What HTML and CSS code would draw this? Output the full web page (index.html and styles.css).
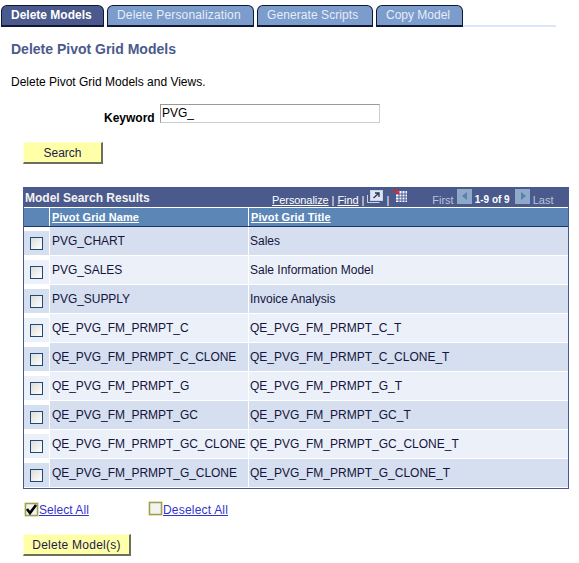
FILE: index.html
```html
<!DOCTYPE html>
<html>
<head>
<meta charset="utf-8">
<title>Delete Pivot Grid Models</title>
<link rel="stylesheet" href="styles.css">
</head>
<body>
<nav class="tabs">
  <a class="tab tab-active t1">Delete Models</a>
  <a class="tab t2">Delete Personalization</a>
  <a class="tab t3">Generate Scripts</a>
  <a class="tab t4">Copy Model</a>
  <span class="tab-rest"></span>
</nav>
<h1 class="title">Delete Pivot Grid Models</h1>
<p class="desc">Delete Pivot Grid Models and Views.</p>
<div class="keyword-row">
  <label class="keyword-label">Keyword</label>
  <input class="keyword-input" type="text" value="PVG_">
</div>
<button class="btn btn-search">Search</button>
<section class="grid">
  <div class="grid-bar">
    <span class="grid-title">Model Search Results</span>
    <span class="grid-tools">
      <a>Personalize</a><i>|</i><a>Find</a><i>|</i>
      <svg class="ico-zoom" width="16" height="13" viewBox="0 0 16 13">
        <path d="M.5 5v7.500h12" fill="none" stroke="#c9d3e6"/>
        <rect x="3.500" y="0.500" width="12" height="10" fill="#dfe6f2" stroke="#c9d3e6"/>
        <path d="M6.500 8l5-4.500M8 3h4v4" fill="none" stroke="#26345e" stroke-width="1.300"/>
      </svg>
      <i>|</i>
      <svg class="ico-dl" width="14" height="14" viewBox="0 0 14 14">
        <path d="M3 2h11v11H3z" fill="#fff"/>
        <path d="M6 2v11M9 2v11M12 2v11M3 5h11M3 8h11M3 11h11" stroke="#4a5a9c"/>
        <path d="M0 0l5 4" stroke="#d8262c" stroke-width="2"/>
        <path d="M2 5h4V1z" fill="#d8262c"/>
      </svg>
    </span>
    <span class="grid-pager">
      <span class="dim first">First</span>
      <svg class="arrow" width="15" height="15" viewBox="0 0 15 15"><rect width="15" height="15" fill="#8fa9c8"/><path d="M10 3v8L5 7z" fill="#5b80aa"/></svg>
      <b class="count">1-9 of 9</b>
      <svg class="arrow" width="15" height="15" viewBox="0 0 15 15"><rect width="15" height="15" fill="#8fa9c8"/><path d="M6 3v8l5-4z" fill="#5b80aa"/></svg>
      <span class="dim last">Last</span>
    </span>
  </div>
  <div class="row head">
    <div class="c0"></div>
    <div class="c1"><a>Pivot Grid Name</a></div>
    <div class="c2"><a>Pivot Grid Title</a></div>
  </div>
  <div class="row odd"><div class="c0"><span class="box"></span></div><div class="c1">PVG_CHART</div><div class="c2">Sales</div></div>
  <div class="row even"><div class="c0"><span class="box"></span></div><div class="c1">PVG_SALES</div><div class="c2">Sale Information Model</div></div>
  <div class="row odd"><div class="c0"><span class="box"></span></div><div class="c1">PVG_SUPPLY</div><div class="c2">Invoice Analysis</div></div>
  <div class="row even"><div class="c0"><span class="box"></span></div><div class="c1">QE_PVG_FM_PRMPT_C</div><div class="c2">QE_PVG_FM_PRMPT_C_T</div></div>
  <div class="row odd"><div class="c0"><span class="box"></span></div><div class="c1">QE_PVG_FM_PRMPT_C_CLONE</div><div class="c2">QE_PVG_FM_PRMPT_C_CLONE_T</div></div>
  <div class="row even"><div class="c0"><span class="box"></span></div><div class="c1">QE_PVG_FM_PRMPT_G</div><div class="c2">QE_PVG_FM_PRMPT_G_T</div></div>
  <div class="row odd"><div class="c0"><span class="box"></span></div><div class="c1">QE_PVG_FM_PRMPT_GC</div><div class="c2">QE_PVG_FM_PRMPT_GC_T</div></div>
  <div class="row even"><div class="c0"><span class="box"></span></div><div class="c1">QE_PVG_FM_PRMPT_GC_CLONE</div><div class="c2">QE_PVG_FM_PRMPT_GC_CLONE_T</div></div>
  <div class="row odd"><div class="c0"><span class="box"></span></div><div class="c1">QE_PVG_FM_PRMPT_G_CLONE</div><div class="c2">QE_PVG_FM_PRMPT_G_CLONE_T</div></div>
</section>
<div class="select-row">
  <span class="sel sel-all">
    <svg class="selbox" width="15" height="15" viewBox="0 0 15 15">
      <rect width="15" height="15" fill="#ffffa8"/>
      <rect x="1.500" y="1.500" width="12" height="12" fill="#f4f4ee" stroke="#9a9a70" stroke-width="1.500"/>
      <path d="M3 7l3 4 6-8" fill="none" stroke="#000" stroke-width="2.600"/>
    </svg>
    <a>Select All</a>
  </span>
  <span class="sel sel-none">
    <svg class="selbox up" width="15" height="15" viewBox="0 0 15 15">
      <rect width="15" height="15" fill="#ffffa8"/>
      <rect x="1.500" y="1.500" width="12" height="12" fill="#f4f4ee" stroke="#9a9a70" stroke-width="1.500"/>
    </svg>
    <a>Deselect All</a>
  </span>
</div>
<button class="btn btn-delete">Delete Model(s)</button>
</body>
</html>
```
FILE: styles.css
```css
html, body { margin: 0; padding: 0; }
body {
  width: 579px;
  height: 563px;
  overflow: hidden;
  background: #fff;
  font-family: "Liberation Sans", Arial, sans-serif;
  font-size: 12px;
  color: #000;
  box-sizing: border-box;
  padding-top: 5px;
}
.tabs {
  display: flex;
  align-items: flex-end;
  height: 22px;
  margin-left: 1px;
  width: 555px;
}
.tab {
  box-sizing: border-box;
  height: 22px;
  margin-right: 3px;
  padding-left: 9px;
  border: 1px solid #10183a;
  border-width: 1px 1px 2px 1px;
  border-radius: 6px 6px 0 0;
  background: #7c9ccb;
  color: #e6edfa;
  font-size: 12px;
  line-height: 18px;
  white-space: nowrap;
}
.t1 { width: 103px; }
.t2 { width: 147px; letter-spacing: .17px; }
.t3 { width: 116px; letter-spacing: .08px; }
.t4 { width: 87px; margin-right: 0; }
.tab-active {
  background: #4b5a8c;
  color: #fff;
  font-weight: bold;
}
.tab-rest {
  flex: 1;
  height: 2px;
  background: #dbe6fb;
}
.title {
  margin: 14px 0 0 11px;
  font-size: 14px;
  line-height: 16px;
  font-weight: bold;
  color: #4b5a8c;
}
.desc {
  margin: 18px 0 0 11px;
  line-height: 14px;
}
.keyword-row {
  display: flex;
  align-items: flex-start;
  margin: 15px 0 0 104px;
  height: 18px;
}
.keyword-label {
  font-weight: bold;
  margin-top: 7px;
  line-height: 14px;
  width: 56px;
}
.keyword-input {
  box-sizing: border-box;
  width: 220px;
  height: 19px;
  padding: 0 0 1px 1px;
  border: 1px solid;
  border-color: #999 #ccc #ccc #999;
  font: 12px "Liberation Sans", Arial, sans-serif;
  color: #000;
  background: #fff;
  outline: none;
}
.btn {
  display: block;
  box-sizing: border-box;
  height: 22px;
  padding: 0;
  margin-left: 23px;
  border: 1px solid;
  border-color: #ffffd8 #6e6e5e #6e6e5e #ffffd8;
  border-width: 1px 2px 2px 1px;
  background: #ffffa8;
  font: 12px "Liberation Sans", Arial, sans-serif;
  color: #1c1c4a;
}
.btn-search { width: 80px; margin-top: 20px; }
.btn-delete { width: 108px; margin-top: 13px; letter-spacing: .25px; }
.grid {
  box-sizing: border-box;
  width: 546px;
  height: 302px;
  margin: 23px 0 0 23px;
  border: 1px solid #4b5a8c;
  border-top: 0;
  background: #fff;
}
.grid-bar {
  display: flex;
  align-items: center;
  height: 20px;
  margin: 0 -1px;
  background: #4b5a8c;
  color: #e8ecf6;
  font-size: 11px;
}
.grid-title {
  margin: 2px 0 0 2px;
  width: 247px;
  font-size: 12px;
  font-weight: bold;
  color: #f2f2f2;
}
.grid-tools {
  display: flex;
  align-items: center;
  font-size: 11px;
  color: #fff;
}
.grid-tools a { text-decoration: underline; margin-top: 5px; letter-spacing: -.08px; }
.grid-tools i { font-style: normal; margin: 5px 3px 0; }
.ico-zoom { margin: -2px 0 0 0; }
.ico-dl { margin: -3px 0 0 1px; }
.grid-pager {
  display: flex;
  align-items: center;
  margin-left: 25px;
  font-size: 11px;
}
.dim { color: #b9c4da; margin-top: 5px; }
.arrow { margin: -2px 3px 0 3px; }
.count { color: #fff; margin: 5px 2px 0 0; font-size: 10px; }
.row {
  display: grid;
  grid-template-columns: 26px 199px 1fr;
  height: 29px;
  box-sizing: border-box;
}
.row.head {
  height: 20px;
  background: #5b86b6;
  border-top: 1px solid #fff;
  border-bottom: 1px solid #1d3566;
  font-weight: bold;
  font-size: 11px;
  line-height: 18px;
  letter-spacing: .1px;
}
.head a { color: #fff; text-decoration: underline; }
.head .c0, .head .c1 { border-right: 1px solid #fff; }
.head .c1, .head .c2 { padding-left: 2px; }
.odd { background: #d5dfef; border-bottom: 1px solid #fff; }
.even { background: #ecf0f9; border-bottom: 1px solid #fff; }
.row:last-child { height: 28px; border-bottom: 0; }
.row:not(.head) .c1, .row:not(.head) .c2 {
  padding-top: 7px;
  line-height: 14px;
  color: #14143c;
  white-space: nowrap;
}
.row:not(.head) .c1 { padding-left: 2px; letter-spacing: -.05px; }
.row:not(.head) .c2 { padding-left: 1px; }
.row:not(.head) .c0, .row:not(.head) .c1 { border-right: 1px solid #fff; }
.row:not(.head) .c0 {
  padding: 6px 0 0 6px;
  box-sizing: border-box;
  border-top: 4px solid #fff;
}
.box {
  display: block;
  box-sizing: border-box;
  width: 13px;
  height: 13px;
  border: 1px solid #1f4a78;
  background: linear-gradient(135deg, #dcdcd8, #fff);
}
.select-row {
  display: flex;
  margin: 12px 0 0 24px;
  height: 20px;
}
.sel {
  display: flex;
  align-items: center;
}
.sel a {
  text-decoration: underline;
  color: #3333cc;
  line-height: 14px;
  margin-top: -2px;
  letter-spacing: .05px;
}
.sel-all { width: 124px; }
.sel-none a { letter-spacing: .2px; }
.selbox { margin-top: -3px; }
.selbox.up { margin-top: -6px; }
```
